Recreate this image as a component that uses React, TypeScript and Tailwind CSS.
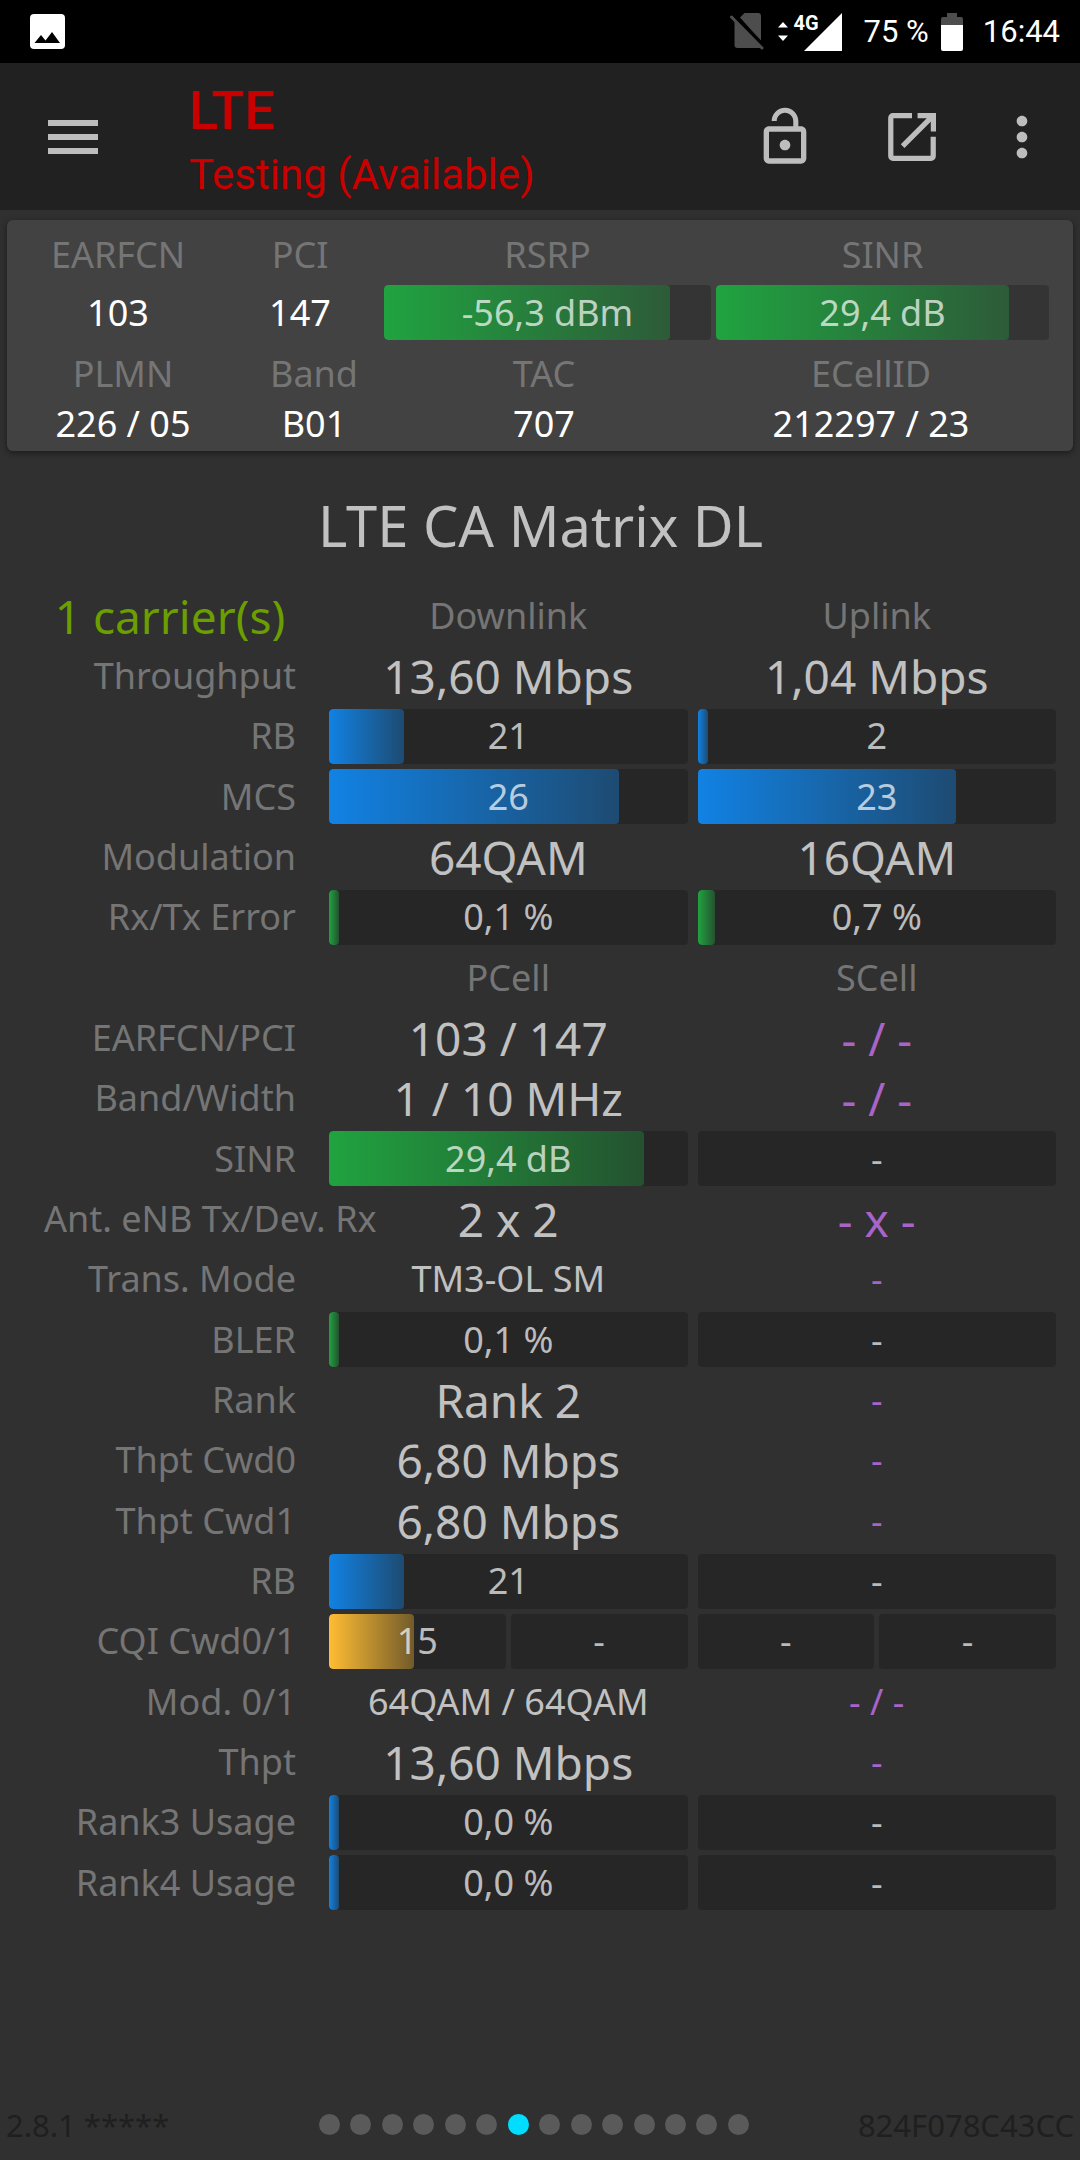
import React from 'react';
import { MdLockOpen, MdMoreVert } from 'react-icons/md';

type Tone = 'blue' | 'green' | 'amber';

type BarData = {
  text: string;
  percent?: number;
  tone?: Tone;
};

type Cell =
  | { kind: 'head' | 'large' | 'small' | 'none' | 'noneSmall'; text: string }
  | { kind: 'bars'; bars: BarData[] };

type Row = { label: string; cells: [Cell, Cell] };

const tones: Record<Tone, string> = {
  blue: 'from-[#1182e4] to-[#1182e4]/40',
  green: 'from-[#20a340] to-[#20a340]/35',
  amber: 'from-[#ffbd33] to-[#ffbd33]/35',
};

const textStyles = {
  head: 'text-[36px] text-[#757575]',
  large: 'text-[46px] text-[#c1c1c1]',
  small: 'text-[36px] text-[#c1c1c1]',
  none: 'text-[46px] text-[#a864c8]',
  noneSmall: 'text-[36px] text-[#a864c8]',
};

const head = (text: string): Cell => ({ kind: 'head', text });
const large = (text: string): Cell => ({ kind: 'large', text });
const small = (text: string): Cell => ({ kind: 'small', text });
const none = (text: string): Cell => ({ kind: 'none', text });
const noneSmall = (text: string): Cell => ({ kind: 'noneSmall', text });
const bar = (text: string, percent?: number, tone?: Tone): Cell => ({
  kind: 'bars',
  bars: [{ text, percent, tone }],
});

const rows: Row[] = [
  { label: 'Throughput', cells: [large('13,60 Mbps'), large('1,04 Mbps')] },
  { label: 'RB', cells: [bar('21', 21, 'blue'), bar('2', 2.8, 'blue')] },
  { label: 'MCS', cells: [bar('26', 81, 'blue'), bar('23', 72, 'blue')] },
  { label: 'Modulation', cells: [large('64QAM'), large('16QAM')] },
  { label: 'Rx/Tx Error', cells: [bar('0,1 %', 2.8, 'green'), bar('0,7 %', 4.8, 'green')] },
  { label: '', cells: [head('PCell'), head('SCell')] },
  { label: 'EARFCN/PCI', cells: [large('103 / 147'), none('- / -')] },
  { label: 'Band/Width', cells: [large('1 / 10 MHz'), none('- / -')] },
  { label: 'SINR', cells: [bar('29,4 dB', 88, 'green'), bar('-')] },
  { label: 'Ant. eNB Tx/Dev. Rx', cells: [large('2 x 2'), none('- x -')] },
  { label: 'Trans. Mode', cells: [small('TM3-OL SM'), noneSmall('-')] },
  { label: 'BLER', cells: [bar('0,1 %', 2.8, 'green'), bar('-')] },
  { label: 'Rank', cells: [large('Rank 2'), noneSmall('-')] },
  { label: 'Thpt Cwd0', cells: [large('6,80 Mbps'), noneSmall('-')] },
  { label: 'Thpt Cwd1', cells: [large('6,80 Mbps'), noneSmall('-')] },
  { label: 'RB', cells: [bar('21', 21, 'blue'), bar('-')] },
  {
    label: 'CQI Cwd0/1',
    cells: [
      { kind: 'bars', bars: [{ text: '15', percent: 48, tone: 'amber' }, { text: '-' }] },
      { kind: 'bars', bars: [{ text: '-' }, { text: '-' }] },
    ],
  },
  { label: 'Mod. 0/1', cells: [small('64QAM / 64QAM'), noneSmall('- / -')] },
  { label: 'Thpt', cells: [large('13,60 Mbps'), noneSmall('-')] },
  { label: 'Rank3 Usage', cells: [bar('0,0 %', 2.8, 'blue'), bar('-')] },
  { label: 'Rank4 Usage', cells: [bar('0,0 %', 2.8, 'blue'), bar('-')] },
];

const Bar: React.FC<BarData> = ({ text, percent = 0, tone = 'blue' }) => (
  <div className="relative flex h-[55px] flex-1 items-center justify-center overflow-hidden rounded bg-black/20 text-[36px] leading-none">
    <div
      className={`absolute inset-y-0 left-0 rounded bg-linear-to-r ${tones[tone]}`}
      style={{ width: `${percent}%` }}
    />
    <span className="relative text-white/70">{text}</span>
  </div>
);

const StatusBar: React.FC = () => (
  <div className="flex h-[63px] items-center justify-between bg-black pr-5 pl-[30px] font-['Roboto',sans-serif] text-[31px] leading-none text-white">
    <svg width="35" height="35" viewBox="0 0 35 35" aria-hidden="true">
      <rect width="35" height="35" rx="4" fill="#fff" />
      <path d="M4.500 29 11 21l4.500 5.500L22 18l8 11z" fill="#000" />
    </svg>
    <div className="flex items-center">
      <svg width="34" height="37" viewBox="0 0 34 37" aria-hidden="true">
        <path d="M10 4.500 14.500 0H28a3 3 0 0 1 3 3v25z" fill="#4d4d4d" />
        <path d="M4.500 7v25a3 3 0 0 0 3 3h24z" fill="#4d4d4d" />
        <path d="M1.500 4 32 35" stroke="#4d4d4d" strokeWidth="3" strokeLinecap="round" />
        <path d="M5 3 33 31.500" stroke="#000" strokeWidth="3" />
      </svg>
      <svg className="ml-3.5" width="10" height="19" viewBox="0 0 10 19" aria-hidden="true">
        <path d="M0 5.500 5 0l5 5.500zM0 13.500h10L5 19z" fill="#fff" />
      </svg>
      <div className="relative ml-4">
        <svg width="38" height="38" viewBox="0 0 38 38" aria-hidden="true">
          <path d="M38 0v38H0z" fill="#fff" />
        </svg>
        <span className="absolute top-0 -left-2.5 text-[20px] leading-none font-bold">4G</span>
      </div>
      <span className="ml-[22px]">75 %</span>
      <svg className="ml-3" width="22" height="38" viewBox="0 0 22 38" aria-hidden="true">
        <path d="M6 0h10v4h4a2 2 0 0 1 2 2v6H0V6a2 2 0 0 1 2-2h4z" fill="#4d4d4d" />
        <path d="M0 12h22v24a2 2 0 0 1-2 2H2a2 2 0 0 1-2-2z" fill="#fff" />
      </svg>
      <span className="ml-5">16:44</span>
    </div>
  </div>
);

const AppBar: React.FC = () => (
  <header className="flex h-[147px] items-center bg-[#212121] pr-[26px] pl-12 font-['Roboto',sans-serif] text-[#bdbdbd]">
    <button type="button" aria-label="Menu">
      <svg width="50" height="34" viewBox="0 0 50 34" fill="currentColor" aria-hidden="true">
        <path d="M0 0h50v6H0zM0 14h50v6H0zM0 28h50v6H0z" />
      </svg>
    </button>
    <div className="ml-[91px] flex-1 pt-3 text-[#c80000]">
      <h1 className="text-[54px] leading-16 font-medium">LTE</h1>
      <p className="text-[42px] leading-16">Testing (Available)</p>
    </div>
    <button type="button" aria-label="Unlock">
      <MdLockOpen size={64} />
    </button>
    <button type="button" aria-label="Open in new window" className="ml-[71px]">
      <svg width="48" height="48" viewBox="0 0 138 138" fill="none" stroke="currentColor" strokeWidth="15" aria-hidden="true">
        <path d="M69 7.500H14a6 6 0 0 0-6 6v111a6 6 0 0 0 6 6h110a6 6 0 0 0 6-6V68" />
        <path d="M85 7.500h45.500V53M42 95 129 8" />
      </svg>
    </button>
    <button type="button" aria-label="More options" className="ml-[54px]">
      <MdMoreVert size={64} />
    </button>
  </header>
);

const SummaryCard: React.FC = () => (
  <section className="mx-[7px] mt-2.5 rounded-md bg-[#424242] pt-1 pb-[2px] text-center text-[36px] whitespace-nowrap text-white shadow-[0_2px_6px_rgba(0,0,0,0.45)]">
    <div className="grid grid-cols-[196fr_158fr_327fr_333fr] items-center gap-x-[5px] pr-6 pl-[13px]">
      <span className="leading-[61px] text-[#757575]">EARFCN</span>
      <span className="leading-[61px] text-[#757575]">PCI</span>
      <span className="leading-[61px] text-[#757575]">RSRP</span>
      <span className="leading-[61px] text-[#757575]">SINR</span>
      <span>103</span>
      <span>147</span>
      <Bar text="-56,3 dBm" percent={87.5} tone="green" />
      <Bar text="29,4 dB" percent={88} tone="green" />
    </div>
    <div className="mt-[9px] grid grid-cols-[220fr_162fr_298fr_356fr] pr-6 pl-1.5 leading-[50px]">
      <span className="text-[#757575]">PLMN</span>
      <span className="text-[#757575]">Band</span>
      <span className="text-[#757575]">TAC</span>
      <span className="text-[#757575]">ECellID</span>
      <span>226 / 05</span>
      <span>B01</span>
      <span>707</span>
      <span>212297 / 23</span>
    </div>
  </section>
);

const MatrixCell: React.FC<{ cell: Cell }> = ({ cell }) => {
  if (cell.kind === 'bars') {
    return (
      <td className="px-[5px]">
        <div className="flex gap-[5px]">
          {cell.bars.map((b, i) => (
            <Bar key={i} {...b} />
          ))}
        </div>
      </td>
    );
  }
  return <td className={`px-[5px] text-center ${textStyles[cell.kind]}`}>{cell.text}</td>;
};

const Matrix: React.FC = () => (
  <main className="flex-1 pr-[19px] pl-11">
    <h2 className="mt-[42px] mb-[29px] pr-6 text-center text-[56px] leading-16 text-[#c1c1c1]">LTE CA Matrix DL</h2>
    <table className="w-full table-fixed leading-none whitespace-nowrap">
      <thead>
        <tr className="h-[60px]">
          <th className="w-[280px] pr-7 text-center text-[46px] font-normal text-[#6b9e00]">1 carrier(s)</th>
          <th className="text-[36px] font-normal text-[#757575]">Downlink</th>
          <th className="text-[36px] font-normal text-[#757575]">Uplink</th>
        </tr>
      </thead>
      <tbody>
        {rows.map((row, i) => (
          <tr key={i} className="h-[60px] nth-[3n]:h-[61px]">
            <th className="pr-7 text-right text-[36px] font-normal text-[#757575]">{row.label}</th>
            <MatrixCell cell={row.cells[0]} />
            <MatrixCell cell={row.cells[1]} />
          </tr>
        ))}
      </tbody>
    </table>
  </main>
);

const Footer: React.FC = () => (
  <footer className="flex items-center px-1.5 pb-3 text-[31px] text-[#1f1f1f]">
    <span className="flex-1">2.8.1 *****</span>
    <div className="mr-3 flex w-[430px] justify-between">
      {Array.from({ length: 14 }, (_, i) => (
        <span key={i} className={`size-[21px] rounded-full ${i === 6 ? 'bg-[#00ddff]' : 'bg-[#5a5a5a]'}`} />
      ))}
    </div>
    <span className="flex-1 text-right">824F078C43CC</span>
  </footer>
);

export default function App() {
  return (
    <div className="flex min-h-screen flex-col bg-[#303030] font-['Noto_Sans',sans-serif]">
      <StatusBar />
      <AppBar />
      <SummaryCard />
      <Matrix />
      <Footer />
    </div>
  );
}
